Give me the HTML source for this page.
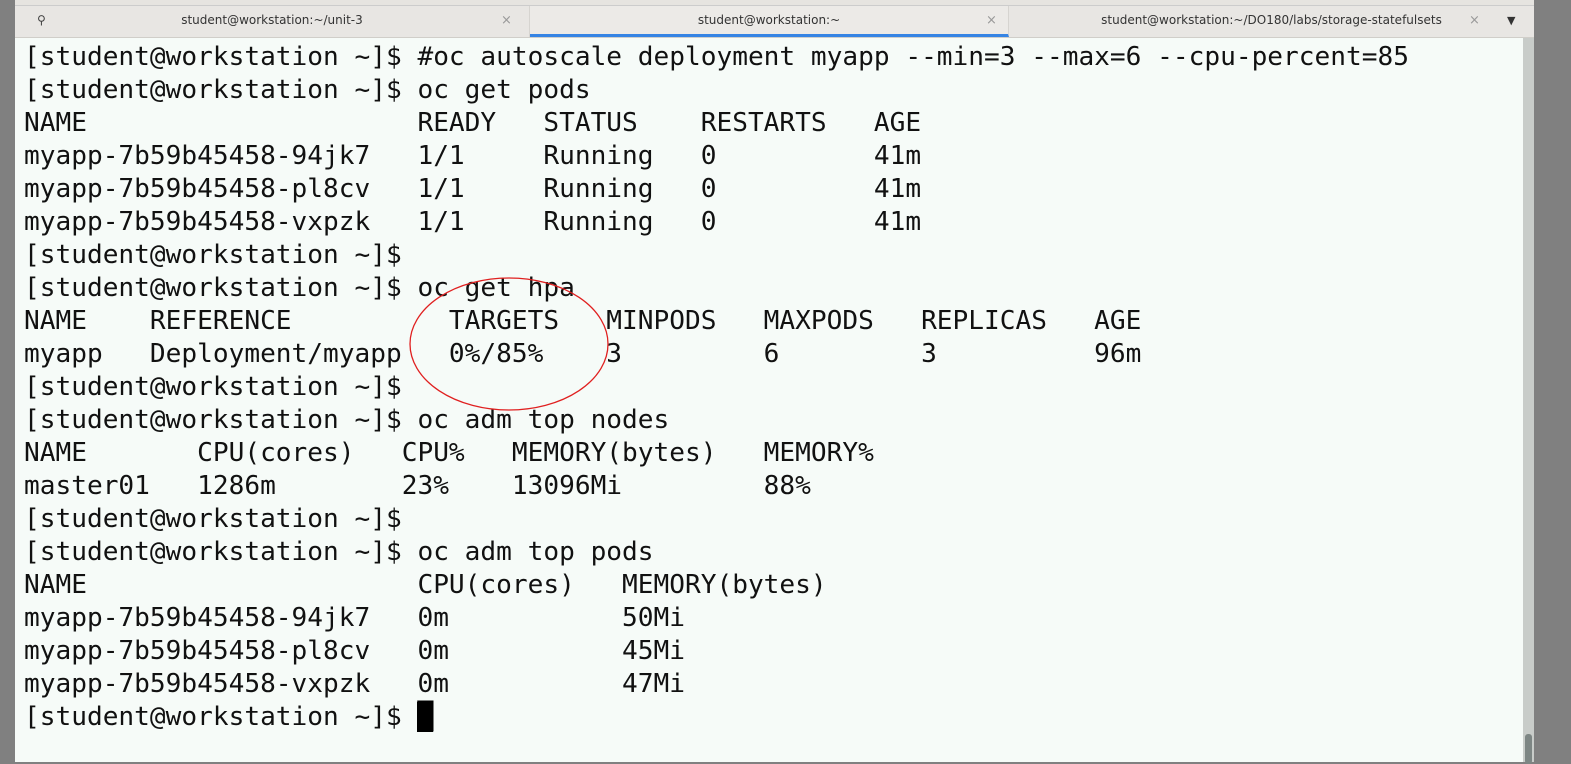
<!DOCTYPE html>
<html><head><style>
body{margin:0;width:1571px;height:762px;overflow:hidden;background:#808080;position:relative;font-family:"DejaVu Sans Mono",monospace}
#win{position:absolute;left:15px;top:0;width:1519px;height:762px;background:#f6fbf8}
#top{position:absolute;left:0;top:0;width:1519px;height:5px;background:#e6e4e0;border-bottom:1px solid #ccc}
#tabs{position:absolute;left:0;top:6px;width:1519px;height:31px;background:#e8e6e3;border-bottom:1px solid #d0cec9;font-family:"DejaVu Sans","Liberation Sans",sans-serif;font-size:12px;color:#333}
.tab{position:absolute;top:0;height:31px;line-height:29px;text-align:center;border-right:1px solid #d6d4d0}
.x{position:absolute;top:0;color:#999;font-size:13px}
#term{position:absolute;left:9px;top:41px;font-size:26.15px;line-height:33px;color:#111;white-space:pre;margin:0;font-family:"DejaVu Sans Mono",monospace}
#sb{position:absolute;left:1508px;top:38px;width:11px;height:724px;background:#c8ccc9}
#th{position:absolute;left:1510px;top:734px;width:7px;height:30px;background:#7d8684;border-radius:3px}
.cur{background:#000;color:#000}
</style></head><body>
<div id="win">
<div id="top"></div>
<div id="tabs">
<div class="tab" style="left:0;width:514px">student@workstation:~/unit-3<span style="position:absolute;left:22px;top:0;color:#444">&#9906;</span><span class="x" style="left:486px">×</span></div>
<div class="tab" style="left:515px;width:478px;background:#eceae7;border-bottom:3px solid #3584e4;height:28px">student@workstation:~<span class="x" style="left:456px">×</span></div>
<div class="tab" style="left:994px;width:525px;border:none">student@workstation:~/DO180/labs/storage-statefulsets<span class="x" style="left:460px">×</span><span style="position:absolute;left:498px;top:0;font-size:11px">&#9660;</span></div>
</div>
<pre id="term">[student@workstation ~]$ #oc autoscale deployment myapp --min=3 --max=6 --cpu-percent=85
[student@workstation ~]$ oc get pods
NAME                     READY   STATUS    RESTARTS   AGE
myapp-7b59b45458-94jk7   1/1     Running   0          41m
myapp-7b59b45458-pl8cv   1/1     Running   0          41m
myapp-7b59b45458-vxpzk   1/1     Running   0          41m
[student@workstation ~]$
[student@workstation ~]$ oc get hpa
NAME    REFERENCE          TARGETS   MINPODS   MAXPODS   REPLICAS   AGE
myapp   Deployment/myapp   0%/85%    3         6         3          96m
[student@workstation ~]$
[student@workstation ~]$ oc adm top nodes
NAME       CPU(cores)   CPU%   MEMORY(bytes)   MEMORY%
master01   1286m        23%    13096Mi         88%
[student@workstation ~]$
[student@workstation ~]$ oc adm top pods
NAME                     CPU(cores)   MEMORY(bytes)
myapp-7b59b45458-94jk7   0m           50Mi
myapp-7b59b45458-pl8cv   0m           45Mi
myapp-7b59b45458-vxpzk   0m           47Mi
[student@workstation ~]$ <span class="cur">█</span></pre>
<svg style="position:absolute;left:390px;top:275px" width="210" height="140"><ellipse cx="104" cy="69" rx="99" ry="66" fill="none" stroke="#e02020" stroke-width="1.3"/></svg>
<div id="sb"></div><div id="th"></div>
</div>
</body></html>
